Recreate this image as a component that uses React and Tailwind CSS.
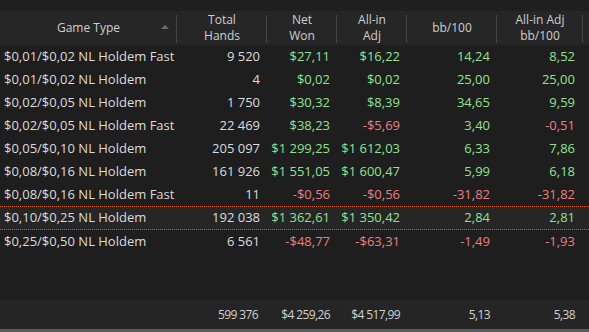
import React from 'react';

const rows = [
  { game: "$0,01/$0,02 NL Holdem Fast", hands: "9 520", net: "$27,11", adj: "$16,22", bb: "14,24", adjbb: "8,52" },
  { game: "$0,01/$0,02 NL Holdem", hands: "4", net: "$0,02", adj: "$0,02", bb: "25,00", adjbb: "25,00" },
  { game: "$0,02/$0,05 NL Holdem", hands: "1 750", net: "$30,32", adj: "$8,39", bb: "34,65", adjbb: "9,59" },
  { game: "$0,02/$0,05 NL Holdem Fast", hands: "22 469", net: "$38,23", adj: "-$5,69", bb: "3,40", adjbb: "-0,51" },
  { game: "$0,05/$0,10 NL Holdem", hands: "205 097", net: "$1 299,25", adj: "$1 612,03", bb: "6,33", adjbb: "7,86" },
  { game: "$0,08/$0,16 NL Holdem", hands: "161 926", net: "$1 551,05", adj: "$1 600,47", bb: "5,99", adjbb: "6,18" },
  { game: "$0,08/$0,16 NL Holdem Fast", hands: "11", net: "-$0,56", adj: "-$0,56", bb: "-31,82", adjbb: "-31,82" },
  { game: "$0,10/$0,25 NL Holdem", hands: "192 038", net: "$1 362,61", adj: "$1 350,42", bb: "2,84", adjbb: "2,81", selected: true },
  { game: "$0,25/$0,50 NL Holdem", hands: "6 561", net: "-$48,77", adj: "-$63,31", bb: "-1,49", adjbb: "-1,93" },
];

const cols = "grid grid-cols-[177px_90px_70px_70px_90px_86px_6px]";

function money(v) {
  return v.startsWith("-") ? "text-[#ec7f7f]" : "text-[#8fe38f]";
}

function HeadCell({ children }) {
  return (
    <div className="relative flex items-center justify-center text-center leading-[16px]">
      {children}
      <div className="absolute right-0 top-[4px] bottom-[2px] w-px bg-[#454545]" />
    </div>
  );
}

export default function App() {
  return (
    <div className="w-[589px] h-[332px] bg-[#1e1e1e] flex flex-col overflow-hidden text-[13px] text-[#dcdcdc]" style={{ fontFamily: '"Open Sans", "Noto Sans", sans-serif' }}>
      <div className="h-[11px] bg-[#1f1f1f]" />
      <div className={`${cols} h-[34px] bg-[#262626] text-[12px] text-[#cfcfcf]`}>
        <HeadCell>
          <span>Game Type</span>
          <span className="absolute right-[8px] top-[14px] w-0 h-0 border-l-[4px] border-r-[4px] border-b-[4px] border-l-transparent border-r-transparent border-b-[#6a6a6a]" />
        </HeadCell>
        <HeadCell>Total<br />Hands</HeadCell>
        <HeadCell>Net<br />Won</HeadCell>
        <HeadCell>All-in<br />Adj</HeadCell>
        <HeadCell>bb/100</HeadCell>
        <HeadCell>All-in Adj<br />bb/100</HeadCell>
        <div />
      </div>
      <div className="flex flex-col">
        {rows.map((r) => (
          <div
            key={r.game}
            className={`${cols} items-center ${r.selected ? "bg-[#262626] border-y border-dotted border-[#d75a0a] h-[24px]" : "h-[23px]"}`}
          >
            <div className="pl-[4px] whitespace-nowrap">{r.game}</div>
            <div className="text-right pr-[7px]">{r.hands}</div>
            <div className={`text-right pr-[7px] whitespace-nowrap ${money(r.net)}`}>{r.net}</div>
            <div className={`text-right pr-[7px] whitespace-nowrap ${money(r.adj)}`}>{r.adj}</div>
            <div className={`text-right pr-[7px] ${money(r.bb)}`}>{r.bb}</div>
            <div className={`text-right pr-[8px] ${money(r.adjbb)}`}>{r.adjbb}</div>
            <div />
          </div>
        ))}
      </div>
      <div className="flex-1" />
      <div className={`${cols} h-[29px] items-center bg-[#252525] text-[12px] text-[#d0d0d0] tracking-[-0.6px]`}>
        <div />
        <div className="text-right pr-[9px]">599 376</div>
        <div className="text-right pr-[7px]">$4 259,26</div>
        <div className="text-right pr-[7px]">$4 517,99</div>
        <div className="text-right pr-[7px]">5,13</div>
        <div className="text-right pr-[8px]">5,38</div>
        <div />
      </div>
      <div className="h-[3px] bg-[#5c5c5c]" />
    </div>
  );
}
